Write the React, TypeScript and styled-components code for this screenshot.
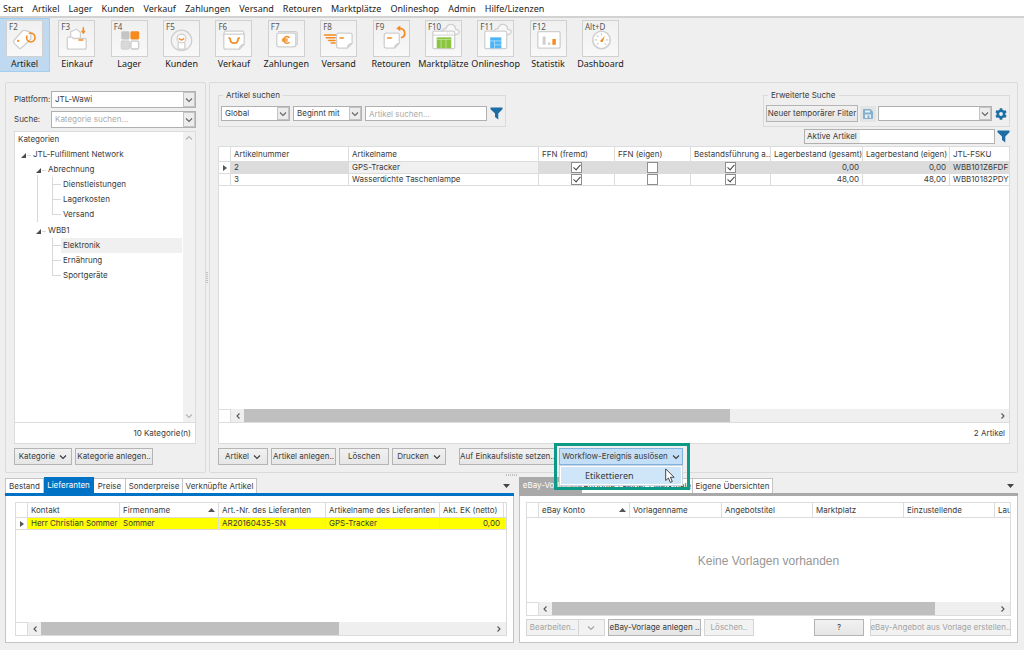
import React from 'react';
import styled, { createGlobalStyle, css } from 'styled-components';

const ORANGE = '#f58a1f';
const LINE = '#cfcfcf';
const UI = '"Inter", "Liberation Sans", sans-serif';
const MENU = '"Noto Sans", "Open Sans", sans-serif';

const GlobalStyle = createGlobalStyle`
  *, *::before, *::after { box-sizing: border-box; }
  body { margin: 0; background: #efefef; color: #3a3a3a; font: 8px/11px ${UI}; }
  button, input, select { font: inherit; color: inherit; margin: 0; border-radius: 0; }
  ul { list-style: none; margin: 0; padding: 0; }
`;

const Page = styled.div`
  min-height: 100vh;
  display: flex;
  flex-direction: column;
  overflow: hidden;
`;

/* ---------- menu bar and ribbon ---------- */

const MenuBar = styled.nav`
  display: flex;
  gap: 9px;
  height: 18px;
  padding: 2px 3px 0;
  background: #fff;
  border-bottom: 2px solid #d2d2d2;
  font: 9px/14px ${MENU};
`;

const MenuLink = styled.a`
  color: #1c1c1c;
  text-decoration: none;
  white-space: nowrap;
`;

const Ribbon = styled.div`
  display: flex;
  justify-content: space-between;
  max-width: 626px;
  height: 54px;
`;

const RibbonButton = styled.button<{ $active?: boolean }>`
  display: flex;
  flex-direction: column;
  align-items: center;
  width: 50px;
  padding: 1px 0 0;
  border: 1px solid ${(p) => (p.$active ? '#a3cdee' : 'transparent')};
  border-width: 1px 1px 1px 0;
  background: ${(p) => (p.$active ? '#bfdaf0' : 'transparent')};
  color: #1c1c1c;
  font: 9px/14px ${MENU};
  white-space: nowrap;
`;

const Tile = styled.span`
  position: relative;
  width: 37px;
  height: 37px;
  border: 1px solid #d0d0d0;
  background: linear-gradient(#f0f0f0, #f8f8f8);

  svg { display: block; }
`;

const KeyHint = styled.span`
  position: absolute;
  top: 0;
  left: 2px;
  color: #555;
  font: 8px/11px ${MENU};
`;

const RibbonSvg = ({ children }: { children: React.ReactNode }) => (
  <svg width="35" height="35" viewBox="0 0 36 36" fill="none" stroke={LINE} strokeWidth="1.3" strokeLinecap="round" strokeLinejoin="round" aria-hidden="true">
    {children}
  </svg>
);

const Cloud = () => (
  <path d="M16 13.5V10.5h1c0-2 2-3 3.500-2.500C21.500 4.500 24 3 26.500 3.500c2.500.500 4 2.500 4 5 3 0 4 2 3.500 3.500-.500 1.500-2 2-4 2z" fill="#f7f7f7" />
);

const ribbonIcons: Record<string, React.ReactNode> = {
  Artikel: (
    <>
      <path d="M7.500 19.500 15.500 10.500q1-1 2.500-.8l5 1.300q1.500.500 1.500 2v5.500L15 27.500q-1.500 1.500-3 0L7.500 23q-1.500-1.700 0-3.500z" fill="#fff" />
      <circle cx="11.500" cy="20.500" r=".5" stroke={ORANGE} />
      <path d="M20.500 15.500c-1.200 2.500.5 5.800 3.700 6 3 .1 5-2.500 4.600-5.200-.6-3-3.300-4.500-5.800-3.600" stroke={ORANGE} strokeWidth="1.600" />
    </>
  ),
  Einkauf: (
    <>
      <path d="M12 17V11l6-2.500 4 3V17" fill="#fff" />
      <path d="M9.500 16.500h4l1 1.500h12q1.500 0 1.500 1.500V27q0 2-2 2H10.500q-2 0-2-2v-9q0-1.500 1-1.500z" fill="#fff" />
      <path d="M20.500 19.500h4" stroke={ORANGE} strokeWidth="1.600" />
      <path d="M25 7v4" stroke={ORANGE} strokeWidth="1.600" />
      <path d="M22.500 10h5L25 13.500z" fill={ORANGE} stroke="none" />
    </>
  ),
  Lager: (
    <g stroke="none">
      <rect x="9.500" y="10.500" width="8.500" height="8.500" rx="1.500" fill="#c4c4c4" />
      <rect x="19" y="10.500" width="9" height="8.500" rx="1.500" fill={ORANGE} />
      <rect x="9.500" y="20.500" width="8.500" height="8.500" rx="1.500" fill="#d9d9d9" stroke="#c9c9c9" strokeWidth=".8" />
      <rect x="19.500" y="20.800" width="8" height="8" rx="1.500" fill="#fff" stroke="#c9c9c9" />
    </g>
  ),
  Kunden: (
    <>
      <circle cx="18" cy="20" r="10.500" />
      <path d="M14.500 29v-5.500q0-1.500 1.500-1.500h4q1.500 0 1.500 1.500V29z" fill="#fff" />
      <circle cx="18" cy="18" r="4.500" fill="#fff" />
      <path d="M15.700 18.300q2.300 2.400 4.600 0" stroke={ORANGE} strokeWidth="1.500" />
    </>
  ),
  Verkauf: (
    <>
      <path d="M9 10.500h19l1 3V24l-5 5H10q-2 0-2-2V13.500z" fill="#fff" />
      <path d="M8 13.500h21M24 29q.5-4.500 5-5" />
      <path d="M13.500 17.500l1 .5c.3 6.500 8 6.500 8.300 0l1-.5" stroke={ORANGE} strokeWidth="1.800" />
    </>
  ),
  Zahlungen: (
    <>
      <path d="M10 11h17q2 0 2 2v10q0 2-2 2" />
      <rect x="8" y="12.500" width="19.500" height="14" rx="2" fill="#fff" />
      <path d="M20.700 16.800c-3-2-5.500 0-5.500 2.700s2.500 4.500 5.500 2.700M13.700 18.700h5M13.700 20.500h5" stroke={ORANGE} strokeWidth="1.400" />
    </>
  ),
  Versand: (
    <>
      <path d="M3.500 14.500H15M5.500 17.300H14.500M8 20H14.500M10.500 22.700H14.500" stroke={ORANGE} strokeWidth="1.500" />
      <path d="M18.500 12.500H30q2 0 2 2V23l-5 5h-8.500q-2.500 0-2.500-2.500V15q0-2.500 2.500-2.500zM27 28q.5-4.500 5-5" fill="#fff" />
      <path d="M19.500 17.500h3.500" stroke={ORANGE} strokeWidth="1.500" />
    </>
  ),
  Retouren: (
    <>
      <path d="M13 12.500H24q2 0 2 2V23l-5 5h-8q-2.500 0-2.500-2.500V15q0-2.500 2.500-2.500zM21 28q.5-4.500 5-5" fill="#fff" />
      <path d="M14 17.500h4" stroke={ORANGE} strokeWidth="1.500" />
      <path d="M25.500 7.500c7-.5 8 8 3 9.500" stroke={ORANGE} strokeWidth="1.800" />
      <path d="M23 7.500l4-3v6z" fill={ORANGE} stroke="none" />
    </>
  ),
  Marktplätze: (
    <>
      <Cloud />
      <rect x="7" y="10.500" width="22.500" height="18" rx="1.500" fill="#fff" />
      <path d="M7.500 14.500h21.500M22 12.500h.1M24.500 12.500h.1M27 12.500h.1" strokeWidth="1" />
      <path d="M11 16.800h15V28H11z" fill="#8bc53f" stroke="none" />
      <path d="M11 19h15M15.500 19v9M20.500 19v9" stroke="#c9e5a5" strokeWidth=".8" />
    </>
  ),
  Onlineshop: (
    <>
      <Cloud />
      <rect x="7" y="10.500" width="22.500" height="18" rx="1.500" fill="#fff" />
      <path d="M12.500 16.800H24V28H12.500z" fill="#4db5f5" stroke="none" />
      <path d="M12.500 20.500H24M17 20.500V28M17 24.500h7" stroke="#b9e1fb" strokeWidth=".8" />
    </>
  ),
  Statistik: (
    <>
      <rect x="7" y="11" width="23" height="17" rx="1.500" fill="#fff" />
      <path d="M12 16h3v8.500h-3zM17.300 22h2.600v2.500h-2.600z" fill="#cfcfcf" stroke="none" />
      <path d="M22 18.500h3.500v6H22z" fill={ORANGE} stroke="none" />
    </>
  ),
  Dashboard: (
    <>
      <circle cx="19" cy="19.500" r="9" fill="#fff" strokeWidth="1.600" />
      <path d="M12.500 19.500h1.500M24 19.500h1.500M19 13v1.500M14.400 15l1 1M14.500 24l1-1M23.500 24l-1-1" />
      <path d="M22.500 15.500l-2 5.500q-2 1.500-3-.5z" fill={ORANGE} stroke="none" />
    </>
  ),
};

const ribbonItems = [
  ['F2', 'Artikel'], ['F3', 'Einkauf'], ['F4', 'Lager'], ['F5', 'Kunden'],
  ['F6', 'Verkauf'], ['F7', 'Zahlungen'], ['F8', 'Versand'], ['F9', 'Retouren'],
  ['F10', 'Marktplätze'], ['F11', 'Onlineshop'], ['F12', 'Statistik'], ['Alt+D', 'Dashboard'],
];

/* ---------- shared controls ---------- */

const Chevron = ({ dir = 'down' }: { dir?: 'down' | 'up' | 'left' | 'right' }) => {
  const d = { down: 'M1 2.500 4 5.500 7 2.500', up: 'M1 5.500 4 2.500 7 5.500', left: 'M5.500 1.500 3 4 5.500 6.500', right: 'M2.500 1.500 5 4 2.500 6.500' }[dir];
  return (
    <svg width="8" height="8" viewBox="0 0 8 8" fill="none" stroke="currentColor" strokeWidth="1.100" aria-hidden="true">
      <path d={d} />
    </svg>
  );
};

const Funnel = () => (
  <svg width="13" height="13" viewBox="0 0 13 13" aria-hidden="true">
    <path d="M.5.500h12v1.700L8.300 6.500v6L5 10V6.500L.5 2.200z" fill="#1c6ea4" />
  </svg>
);

const IconButton = styled.button`
  display: flex;
  align-items: center;
  justify-content: center;
  flex: none;
  width: 13px;
  height: 16px;
  padding: 0;
  border: 0;
  background: none;
`;

const SaveButton = styled(IconButton)`
  width: 16px;
  background: #e2e4e6;
`;

const Button = styled.button<{ $w: number; $gap?: number }>`
  display: flex;
  align-items: center;
  justify-content: center;
  gap: 4px;
  flex: none;
  width: ${(p) => p.$w}px;
  height: 17px;
  margin-left: ${(p) => p.$gap ?? 3}px;
  padding: 0;
  border: 1px solid #b4b4b4;
  background: linear-gradient(#f1f1f1, #e6e6e6);
  white-space: nowrap;
  overflow: hidden;

  &:first-child { margin-left: 0; }
  &:disabled { color: #a3a3a3; border-color: #d5d5d5; background: #f2f2f2; }
`;

const SelectBox = styled.span<{ $w?: number; $tall?: boolean }>`
  display: grid;
  flex: ${(p) => (p.$w ? 'none' : '1')};
  width: ${(p) => (p.$w ? `${p.$w}px` : 'auto')};
  height: ${(p) => (p.$tall ? 17 : 15)}px;

  select {
    grid-area: 1 / 1;
    width: 100%;
    min-width: 0;
    padding: 0 0 0 3px;
    border: 1px solid #b0b0b0;
    background: #fff;
    appearance: none;
  }
`;

const SelectArrow = styled.span`
  grid-area: 1 / 1;
  justify-self: end;
  display: flex;
  align-items: center;
  justify-content: center;
  width: 12px;
  margin: 1px;
  border: 1px solid #c4c4c4;
  background: #ececec;
  color: #666;
  pointer-events: none;
`;

type SelectProps = { w?: number; tall?: boolean; value: string; label?: string; id?: string; muted?: boolean };

const MutedSelect = styled.select<{ $muted?: boolean }>`
  color: ${(p) => (p.$muted ? '#ababab' : 'inherit')};
`;

const Select = ({ w, tall, value, label, id, muted }: SelectProps) => (
  <SelectBox $w={w} $tall={tall}>
    <MutedSelect id={id} aria-label={label} $muted={muted}>
      <option>{value}</option>
    </MutedSelect>
    <SelectArrow><Chevron /></SelectArrow>
  </SelectBox>
);

const TextInput = styled.input<{ $w: number }>`
  width: ${(p) => p.$w}px;
  height: 15px;
  padding: 0 3px;
  border: 1px solid #b0b0b0;
  background: #fff;

  &::placeholder { color: #ababab; opacity: 1; }
`;

const Panel = styled.section`
  display: flex;
  flex-direction: column;
  border: 1px solid #dadada;
  border-radius: 2px;
`;

const Sheet = styled.div`
  display: flex;
  flex: 1;
  flex-direction: column;
  min-width: 0;
  overflow: hidden;
  border: 1px solid #dcdcdc;
  background: #fff;
`;

const SheetFooter = styled.div`
  flex: none;
  height: 21px;
  padding: 0 4px;
  border-top: 1px solid #dcdcdc;
  line-height: 21px;
  text-align: right;
`;

const ButtonRow = styled.div`
  display: flex;
  margin-top: 4px;
`;

/* ---------- scroll bars ---------- */

const ScrollRow = styled.div`
  display: flex;
  flex: none;
  height: 13px;
  color: #555;
`;

const ScrollCorner = styled.span`
  flex: none;
  width: 12px;
  border-top: 1px solid #dcdcdc;
  border-right: 1px solid #dcdcdc;
`;

const ScrollArrow = styled.button`
  display: flex;
  flex: none;
  align-items: center;
  justify-content: center;
  width: 13px;
  padding: 0;
  border: 0;
  background: #efefef;
`;

const ScrollTrack = styled.div`
  flex: 1;
  background: #efefef;
`;

const ScrollThumb = styled.div<{ $size: number }>`
  width: ${(p) => p.$size}%;
  height: 100%;
  background: #bfbfbf;
`;

const HorizontalScroll = ({ size }: { size: number }) => (
  <ScrollRow>
    <ScrollCorner />
    <ScrollArrow aria-label="Nach links"><Chevron dir="left" /></ScrollArrow>
    <ScrollTrack><ScrollThumb $size={size} /></ScrollTrack>
    <ScrollArrow aria-label="Nach rechts"><Chevron dir="right" /></ScrollArrow>
  </ScrollRow>
);

/* ---------- category tree ---------- */

const UpperArea = styled.main`
  display: flex;
  flex: 1;
  min-height: 391px;
  margin: 10px 6px 0 5px;
`;

const CategoryPanel = styled(Panel)`
  flex: none;
  width: 201px;
  padding: 8px 9px 7px 8px;
`;

const FormRow = styled.div`
  display: flex;
  align-items: center;
  margin-bottom: 3px;

  label { flex: none; width: 37px; }
`;

const TreeArea = styled.div`
  display: flex;
  flex: 1;
`;

const Tree = styled.div`
  flex: 1;
  padding: 0 1px 0 3px;
  line-height: 15px;
`;

const Branch = styled.ul<{ $indent: number }>`
  padding-left: ${(p) => p.$indent}px;
`;

const LeafList = styled.ul`
  margin: 0 0 1px 16px;
`;

const Leaf = styled.li<{ $selected?: boolean }>`
  display: flex;
  border-left: 1px solid #d8d8d8;

  &::before {
    content: '';
    flex: none;
    width: 8px;
    height: 8px;
    border-bottom: 1px solid #d8d8d8;
  }

  &:last-child { border-left-color: transparent; }
  &:last-child::before { box-shadow: -1px 0 #d8d8d8; }

  span {
    flex: 1;
    padding-left: 2px;
    background: ${(p) => (p.$selected ? '#f0f0f0' : 'none')};
  }
`;

const Node = styled.div`
  display: flex;
  align-items: center;
  gap: 1px;
`;

const Nested = styled.li<{ $line?: boolean }>`
  margin-left: 3px;

  ${(p) => p.$line && css`
    background: linear-gradient(#d8d8d8, #d8d8d8) 1px 13px / 1px 100% no-repeat;
  `}
`;

const NodeMark = () => (
  <svg width="11" height="10" viewBox="0 0 11 10" aria-hidden="true">
    <path d="M5 3v5H0z" fill="#4a4a4a" />
    <path d="M6 5.500h4" stroke="#d8d8d8" />
  </svg>
);

const VerticalScroll = styled.div`
  display: flex;
  flex-direction: column;
  align-items: center;
  justify-content: space-between;
  width: 12px;
  padding: 2px 0;
  background: #f1f1f1;
  color: #b5b5b5;
`;

const Splitter = styled.div`
  display: flex;
  flex: none;
  align-items: center;
  width: 3px;

  &::before {
    content: '';
    width: 2px;
    height: 12px;
    background: repeating-linear-gradient(#c0c0c0 0 1px, transparent 1px 2px);
  }
`;

/* ---------- article list ---------- */

const ArticlePanel = styled(Panel)`
  flex: 1;
  min-width: 0;
  padding: 7px 7px 7px 8px;
`;

const SearchRow = styled.div`
  display: flex;
  justify-content: space-between;
`;

const SearchGroup = styled.fieldset<{ $gap: number }>`
  display: flex;
  align-items: center;
  gap: ${(p) => p.$gap}px;
  height: 37px;
  margin: 0;
  padding: 0 2px;
  border: 1px solid #dadada;

  legend { height: 11px; margin-left: 2px; padding: 0 3px; }
`;

const ActiveFilter = styled.div`
  display: flex;
  align-items: center;
  justify-content: flex-end;
  gap: 2px;
  margin: 1px 0 2px;
`;

const ActiveField = styled.label`
  display: flex;
  width: 191px;
  height: 15px;
  border: 1px solid #b0b0b0;
  background: #fff;
  line-height: 13px;
  white-space: nowrap;

  span { padding: 0 3px 0 2px; background: #f0f0f0; }
  input { flex: 1; min-width: 0; border: 0; padding: 0; background: none; }
`;

const Grid = styled.table`
  width: 100%;
  flex: none;
  border-collapse: separate;
  border-spacing: 0;
  table-layout: fixed;

  th, td {
    padding: 0 3px;
    border-right: 1px solid #dcdcdc;
    border-bottom: 1px solid #dcdcdc;
    text-align: left;
    font-weight: 400;
    white-space: nowrap;
    overflow: hidden;
  }
  th { height: 15px; line-height: 14px; }
  td { height: 12px; line-height: 11px; }
  th:last-child, td:last-child { border-right: 0; }
`;

const Col = styled.col<{ $w?: number }>`
  width: ${(p) => (p.$w ? `${p.$w}px` : 'auto')};
`;

const Columns = ({ widths }: { widths: number[] }) => (
  <colgroup>
    {widths.map((w, i) => <Col key={i} $w={w} />)}
    <Col />
  </colgroup>
);

const Cell = styled.td<{ $tone?: 'dark' | 'light' | 'yellow' }>`
  background: ${(p) => ({ dark: '#dcdcdc', light: '#f0f0f0', yellow: '#ffff00' })[p.$tone as string] ?? '#fff'};
`;

const NumberCell = styled(Cell)`
  && { text-align: right; }
`;

const CheckCell = styled(Cell)`
  && { padding: 0; }
`;

const MarkCell = styled.td`
  && { padding: 0; }
  svg { display: block; margin: 0 auto; }
`;

const RowMark = () => (
  <MarkCell>
    <svg width="4" height="6" viewBox="0 0 4 6" aria-label="Aktive Zeile"><path d="M0 0v6l4-3z" fill="#555" /></svg>
  </MarkCell>
);

const Check = styled.input`
  display: block;
  position: relative;
  width: 11px;
  height: 11px;
  margin: 0 auto;
  border: 1px solid #8e8e8e;
  background: #fff;
  appearance: none;

  &:checked::after {
    content: '';
    position: absolute;
    top: 0;
    left: 3px;
    width: 4px;
    height: 7px;
    border: solid #444;
    border-width: 0 1px 1px 0;
    transform: rotate(42deg);
  }
`;

const Filler = styled.div`
  flex: 1;
`;

const EmptyNote = styled(Filler)`
  display: flex;
  align-items: center;
  justify-content: center;
  padding-top: 2px;
  color: #969696;
  font: 12px/16px "Liberation Sans", sans-serif;
`;

/* ---------- workflow menu ---------- */

const WorkflowAnchor = styled.div`
  position: relative;
  margin-left: 3px;
`;

const WorkflowButton = styled(Button)`
  border: 1px dotted #2c6fae;
  background: #c3dff7;
  outline: 1px solid #7fb2de;
  outline-offset: -1px;
`;

const WorkflowMenu = styled.ul`
  position: absolute;
  z-index: 2;
  top: 17px;
  left: 0;
  width: 124px;
  padding: 1px;
  border: 1px solid #c8d4de;
  background: #fff;
  font: 9px/17px ${MENU};

  li { padding-left: 24px; background: #cfe6f8; }
`;

const HighlightFrame = styled.div`
  position: absolute;
  z-index: 3;
  inset: -5px -7px -25px -5px;
  border: 3px solid #0c9a86;
  pointer-events: none;
`;

const Pointer = styled.svg`
  position: absolute;
  z-index: 4;
  top: 20px;
  left: 106px;
`;

/* ---------- detail panes ---------- */

const LowerArea = styled.div`
  display: grid;
  grid-template-columns: minmax(0, 51fr) minmax(0, 50fr);
  gap: 5px;
  margin: 0 6px 7px 5px;
`;

const HandleRow = styled.div`
  display: flex;
  justify-content: center;
  height: 4px;
  padding-top: 1px;

  &::before {
    content: '';
    width: 12px;
    height: 2px;
    background: repeating-linear-gradient(90deg, #c0c0c0 0 1px, transparent 1px 2px);
  }
`;

const Pane = styled.section`
  display: flex;
  flex-direction: column;
  height: 166px;
`;

const TabStrip = styled.div<{ $accent: string }>`
  display: flex;
  align-items: flex-end;
  height: 19px;
  border-bottom: 3px solid ${(p) => p.$accent};
`;

const Tab = styled.button<{ $w: number; $accent?: string }>`
  flex: none;
  width: ${(p) => p.$w}px;
  height: ${(p) => (p.$accent ? 16 : 15)}px;
  padding: 0;
  border: 1px solid ${(p) => p.$accent ?? '#c4c4c4'};
  border-bottom: 0;
  background: ${(p) => p.$accent ?? '#fff'};
  color: ${(p) => (p.$accent ? '#fff' : 'inherit')};
  white-space: nowrap;
  overflow: hidden;

  & + & { border-left: 0; }
`;

const TabOverflow = styled.button`
  width: 14px;
  height: 14px;
  margin-left: auto;
  padding: 0;
  border: 0;
  background: none;

  svg { display: block; margin: 0 auto; }
`;

const PaneBody = styled.div`
  display: flex;
  flex: 1;
  flex-direction: column;
  min-height: 0;
  padding: 6px;
  border: 1px solid #c4c4c4;
  border-top: 0;
  background: #fff;

  ${ButtonRow} { margin-top: 3px; }
`;

const SupplierBody = styled(PaneBody)`
  padding-left: 9px;
`;

const SortHead = styled.span`
  display: flex;
  align-items: center;
  justify-content: space-between;
`;

const SortMark = () => (
  <svg width="7" height="4" viewBox="0 0 7 4" aria-hidden="true"><path d="M0 4h7L3.500 0z" fill="#555" /></svg>
);

const OverflowButton = () => (
  <TabOverflow aria-label="Weitere Registerkarten">
    <svg width="7" height="4" viewBox="0 0 7 4" aria-hidden="true"><path d="M0 0h7L3.500 4z" fill="#444" /></svg>
  </TabOverflow>
);

const SplitButton = styled.div`
  display: flex;

  ${Button} + ${Button} { margin-left: -1px; }
`;

const menu = ['Start', 'Artikel', 'Lager', 'Kunden', 'Verkauf', 'Zahlungen', 'Versand', 'Retouren', 'Marktplätze', 'Onlineshop', 'Admin', 'Hilfe/Lizenzen'];

const articles = [
  { nr: '2', name: 'GPS-Tracker', total: '0,00', own: '0,00', sku: 'WBB101Z6FDF', active: true },
  { nr: '3', name: 'Wasserdichte Taschenlampe', total: '48,00', own: '48,00', sku: 'WBB10182PDY', active: false },
];

const CategoryTree = () => (
  <CategoryPanel>
    <FormRow>
      <label htmlFor="platform">Plattform:</label>
      <Select id="platform" tall value="JTL-Wawi" />
    </FormRow>
    <FormRow>
      <label htmlFor="category-search">Suche:</label>
      <Select id="category-search" tall muted value="Kategorie suchen..." />
    </FormRow>
    <Sheet>
      <TreeArea>
        <Tree>
          <div>Kategorien</div>
          <Branch $indent={0}>
            <Nested>
              <Node><NodeMark />JTL-Fulfillment Network</Node>
              <Branch $indent={12}>
                <Nested $line>
                  <Node><NodeMark />Abrechnung</Node>
                  <LeafList>
                    <Leaf><span>Dienstleistungen</span></Leaf>
                    <Leaf><span>Lagerkosten</span></Leaf>
                    <Leaf><span>Versand</span></Leaf>
                  </LeafList>
                </Nested>
                <Nested>
                  <Node><NodeMark />WBB1</Node>
                  <LeafList>
                    <Leaf $selected><span>Elektronik</span></Leaf>
                    <Leaf><span>Ernährung</span></Leaf>
                    <Leaf><span>Sportgeräte</span></Leaf>
                  </LeafList>
                </Nested>
              </Branch>
            </Nested>
          </Branch>
        </Tree>
        <VerticalScroll><Chevron dir="up" /><Chevron /></VerticalScroll>
      </TreeArea>
      <SheetFooter>10 Kategorie(n)</SheetFooter>
    </Sheet>
    <ButtonRow>
      <Button $w={58}>Kategorie <Chevron /></Button>
      <Button $w={78}>Kategorie anlegen..</Button>
    </ButtonRow>
  </CategoryPanel>
);

const ArticleList = () => (
  <ArticlePanel>
    <SearchRow>
      <SearchGroup $gap={3}>
        <legend>Artikel suchen</legend>
        <Select w={69} value="Global" label="Suchbereich" />
        <Select w={69} value="Beginnt mit" label="Vergleich" />
        <TextInput $w={122} placeholder="Artikel suchen..." aria-label="Artikel suchen" />
        <IconButton aria-label="Filtern"><Funnel /></IconButton>
      </SearchGroup>
      <SearchGroup $gap={2}>
        <legend>Erweiterte Suche</legend>
        <Button $w={92} $gap={0}>Neuer temporärer Filter</Button>
        <SaveButton aria-label="Filter speichern">
          <svg width="10" height="10" viewBox="0 0 10 10" aria-hidden="true">
            <path d="M1 0h6.500L10 2.500V9q0 1-1 1H1q-1 0-1-1V1q0-1 1-1z" fill="#86b0cc" />
            <path d="M2 1.500h5v2H2zM2 5.500h6V9H2z" fill="#e8f0f5" />
            <path d="M4.500 6.500h2V9h-2z" fill="#86b0cc" />
          </svg>
        </SaveButton>
        <Select w={114} value="" label="Gespeicherter Filter" />
        <IconButton aria-label="Einstellungen">
          <svg width="12" height="12" viewBox="0 0 12 12" aria-hidden="true">
            <circle cx="6" cy="6" r="3.200" fill="none" stroke="#1c6ea4" strokeWidth="2.600" />
            <path d="M6 .2v2M6 9.800v2M1 3.100l1.700 1M9.300 7.900l1.700 1M1 8.900l1.700-1M9.300 4.100l1.700-1" stroke="#1c6ea4" strokeWidth="2.600" />
          </svg>
        </IconButton>
      </SearchGroup>
    </SearchRow>
    <ActiveFilter>
      <ActiveField><span>Aktive Artikel</span><input /></ActiveField>
      <IconButton aria-label="Filter anwenden"><Funnel /></IconButton>
    </ActiveFilter>
    <Sheet>
      <Grid>
        <Columns widths={[12, 118, 190, 76, 76, 80, 92, 87]} />
        <thead>
          <tr>
            <th />
            <th>Artikelnummer</th>
            <th>Artikelname</th>
            <th>FFN (fremd)</th>
            <th>FFN (eigen)</th>
            <th>Bestandsführung a..</th>
            <th>Lagerbestand (gesamt)</th>
            <th>Lagerbestand (eigen)</th>
            <th>JTL-FSKU</th>
          </tr>
        </thead>
        <tbody>
          {articles.map((a) => {
            const tone = a.active ? 'dark' : undefined;
            return (
              <tr key={a.nr}>
                {a.active ? <RowMark /> : <td />}
                <Cell $tone={tone}>{a.nr}</Cell>
                <Cell $tone={a.active ? 'light' : undefined}>{a.name}</Cell>
                <CheckCell $tone={tone}><Check type="checkbox" defaultChecked aria-label="FFN (fremd)" /></CheckCell>
                <CheckCell $tone={tone}><Check type="checkbox" aria-label="FFN (eigen)" /></CheckCell>
                <CheckCell $tone={tone}><Check type="checkbox" defaultChecked aria-label="Bestandsführung aktiv" /></CheckCell>
                <NumberCell $tone={tone}>{a.total}</NumberCell>
                <NumberCell $tone={tone}>{a.own}</NumberCell>
                <Cell $tone={tone}>{a.sku}</Cell>
              </tr>
            );
          })}
        </tbody>
      </Grid>
      <Filler />
      <HorizontalScroll size={64.6} />
      <SheetFooter>2 Artikel</SheetFooter>
    </Sheet>
    <ButtonRow>
      <Button $w={50}>Artikel <Chevron /></Button>
      <Button $w={65}>Artikel anlegen..</Button>
      <Button $w={50}>Löschen</Button>
      <Button $w={54}>Drucken <Chevron /></Button>
      <Button $w={97} $gap={13}>Auf Einkaufsliste setzen..</Button>
      <WorkflowAnchor>
        <WorkflowButton $w={124} aria-haspopup="menu" aria-expanded="true">Workflow-Ereignis auslösen <Chevron /></WorkflowButton>
        <WorkflowMenu role="menu"><li role="menuitem">Etikettieren</li></WorkflowMenu>
        <HighlightFrame />
        <Pointer width="10" height="16" viewBox="0 0 10 16" aria-hidden="true">
          <path d="M.7.900v11.600l2.700-2.500 1.900 4.400 2-.9-1.900-4.200h3.700z" fill="#fff" stroke="#333" strokeWidth=".9" />
        </Pointer>
      </WorkflowAnchor>
    </ButtonRow>
  </ArticlePanel>
);

const BLUE = '#0072c6';
const GREY = '#a9a9a9';

const SupplierPane = () => (
  <Pane>
    <TabStrip $accent={BLUE}>
      <Tab $w={39}>Bestand</Tab>
      <Tab $w={50} $accent={BLUE}>Lieferanten</Tab>
      <Tab $w={32}>Preise</Tab>
      <Tab $w={57}>Sonderpreise</Tab>
      <Tab $w={74}>Verknüpfte Artikel</Tab>
      <OverflowButton />
    </TabStrip>
    <SupplierBody>
      <Sheet>
        <Grid>
          <Columns widths={[12, 92, 99, 107, 114, 64]} />
          <thead>
            <tr>
              <th />
              <th>Kontakt</th>
              <th><SortHead>Firmenname<SortMark /></SortHead></th>
              <th>Art.-Nr. des Lieferanten</th>
              <th>Artikelname des Lieferanten</th>
              <th>Akt. EK (netto)</th>
              <th />
            </tr>
          </thead>
          <tbody>
            <tr>
              <RowMark />
              <Cell $tone="yellow">Herr Christian Sommer</Cell>
              <Cell $tone="yellow">Sommer</Cell>
              <Cell $tone="yellow">AR20160435-SN</Cell>
              <Cell $tone="yellow">GPS-Tracker</Cell>
              <NumberCell $tone="yellow">0,00</NumberCell>
              <Cell $tone="yellow" />
            </tr>
          </tbody>
        </Grid>
        <Filler />
        <HorizontalScroll size={66} />
      </Sheet>
    </SupplierBody>
  </Pane>
);

const TemplatePane = () => (
  <Pane>
    <TabStrip $accent={GREY}>
      <Tab $w={63} $accent={GREY}>eBay-Vorlagen</Tab>
      <Tab $w={111}>Attribute / Felder / Merkmale</Tab>
      <Tab $w={80}>Eigene Übersichten</Tab>
      <OverflowButton />
    </TabStrip>
    <PaneBody>
      <Sheet>
        <Grid>
          <Columns widths={[12, 91, 92, 91, 91, 91]} />
          <thead>
            <tr>
              <th />
              <th><SortHead>eBay Konto<SortMark /></SortHead></th>
              <th>Vorlagenname</th>
              <th>Angebotstitel</th>
              <th>Marktplatz</th>
              <th>Einzustellende</th>
              <th>Lau</th>
            </tr>
          </thead>
        </Grid>
        <EmptyNote>Keine Vorlagen vorhanden</EmptyNote>
        <HorizontalScroll size={86} />
      </Sheet>
      <ButtonRow>
        <SplitButton>
          <Button $w={53} disabled>Bearbeiten..</Button>
          <Button $w={27} disabled aria-label="Weitere Aktionen"><Chevron /></Button>
        </SplitButton>
        <Button $w={93}>eBay-Vorlage anlegen ..</Button>
        <Button $w={50} disabled>Löschen..</Button>
        <Filler />
        <Button $w={50}>?</Button>
        <Button $w={141} $gap={6} disabled>eBay-Angebot aus Vorlage erstellen..</Button>
      </ButtonRow>
    </PaneBody>
  </Pane>
);

export default function App() {
  return (
    <Page>
      <GlobalStyle />
      <MenuBar>
        {menu.map((m) => <MenuLink key={m} href="#">{m}</MenuLink>)}
      </MenuBar>
      <Ribbon>
        {ribbonItems.map(([key, name], i) => (
          <RibbonButton key={name} $active={i === 0}>
            <Tile>
              <KeyHint>{key}</KeyHint>
              <RibbonSvg>{ribbonIcons[name]}</RibbonSvg>
            </Tile>
            {name}
          </RibbonButton>
        ))}
      </Ribbon>
      <UpperArea>
        <CategoryTree />
        <Splitter />
        <ArticleList />
      </UpperArea>
      <HandleRow />
      <LowerArea>
        <SupplierPane />
        <TemplatePane />
      </LowerArea>
    </Page>
  );
}
